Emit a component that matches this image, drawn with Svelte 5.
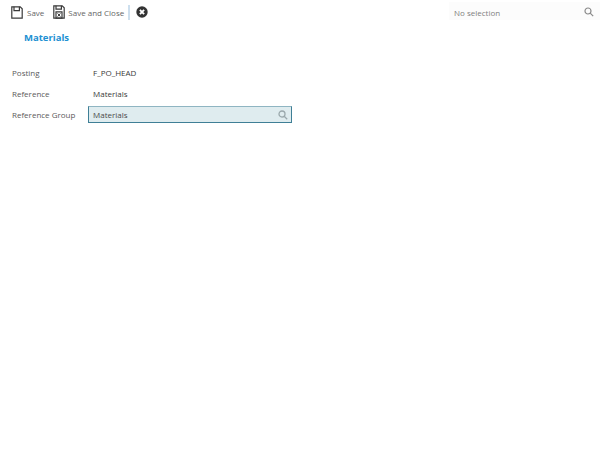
<script>
  const rows = [
    { label: 'Posting', value: 'F_PO_HEAD' },
    { label: 'Reference', value: 'Materials' }
  ];
</script>

<div class="page">
  <div class="topbar">
    <div class="toolbar">
      <button class="tool save">
        <svg width="12" height="13" viewBox="0 0 12 13" fill="none" stroke="#3a3a3a" stroke-width="1.2">
          <path d="M.8.8h8.4l2 2v9.4H.8z" />
          <path d="M3 .8v3.8h5.4V.8" />
        </svg>
        <span>Save</span>
      </button>
      <button class="tool close">
        <svg width="12" height="14" viewBox="0 0 12 14" fill="none" stroke="#3a3a3a" stroke-width="1.2">
          <path d="M.8.8h8.4l2 2v10.4H.8z" />
          <path d="M3 .8v3.4h5.4V.8" />
          <path d="M3 6.8h6v6.4H3z" />
          <path d="M4.6 8.4l2.8 3.2M7.4 8.4l-2.8 3.2" stroke-width="1" />
        </svg>
        <span>Save and Close</span>
      </button>
      <div class="sep"></div>
      <svg class="cancel" width="12" height="12" viewBox="0 0 12 12">
        <circle cx="6" cy="6" r="5.7" fill="#333" />
        <path d="M3.9 3.9l4.2 4.2M8.1 3.9l-4.2 4.2" stroke="#fff" stroke-width="1.9" />
      </svg>
    </div>
    <div class="selector">
      <span>No selection</span>
      <svg width="10" height="10" viewBox="0 0 10 10" fill="none" stroke="#8a8a8a" stroke-width="1.2">
        <circle cx="4" cy="4" r="3" />
        <path d="M6.2 6.2l3 3" />
      </svg>
    </div>
  </div>

  <h1>Materials</h1>

  <div class="form">
    {#each rows as row}
      <div class="row">
        <div class="label">{row.label}</div>
        <div class="value">{row.value}</div>
      </div>
    {/each}
    <div class="row">
      <div class="label">Reference Group</div>
      <div class="input">
        <span>Materials</span>
        <svg width="10" height="10" viewBox="0 0 10 10" fill="none" stroke="#9aa8ac" stroke-width="1.3">
          <circle cx="4" cy="4" r="3" />
          <path d="M6.2 6.2l3 3" />
        </svg>
      </div>
    </div>
  </div>
</div>

<style>
  :global(body) {
    margin: 0;
    background: #fff;
  }
  .page {
    width: 600px;
    height: 458px;
    font-family: "Open Sans", sans-serif;
    font-size: 8px;
    color: #444;
    overflow: hidden;
  }
  .topbar {
    display: flex;
    justify-content: space-between;
    height: 22px;
    padding-top: 2px;
    padding-left: 11px;
    box-sizing: border-box;
  }
  .toolbar {
    display: flex;
    align-items: center;
    height: 20px;
  }
  .tool {
    display: flex;
    align-items: center;
    gap: 4px;
    padding: 0;
    border: 0;
    background: none;
    font: inherit;
    color: #666;
  }
  .close {
    gap: 3px;
  }
  .save {
    margin-right: 9px;
  }
  .sep {
    width: 2px;
    height: 15px;
    background: #cddfee;
    margin: 0 6px 0 4px;
  }
  .selector {
    width: 151px;
    height: 18px;
    box-sizing: border-box;
    padding: 3px 6px 0 5px;
    background: #fcfcfc;
    display: flex;
    justify-content: space-between;
    align-items: flex-start;
    color: #808080;
    line-height: 15px;
  }
  .selector svg {
    margin-top: 2px;
  }
  h1 {
    margin: 9px 0 0 24px;
    font-size: 9.5px;
    line-height: 14px;
    font-weight: 700;
    color: #2190d2;
  }
  .form {
    margin-top: 17px;
    padding-left: 12px;
    display: flex;
    flex-direction: column;
  }
  .row {
    display: flex;
    align-items: center;
    height: 21px;
  }
  .label {
    width: 76px;
    color: #5a5a5a;
  }
  .value {
    margin-left: 5px;
    color: #3a3a3a;
  }
  .input {
    width: 204px;
    height: 17px;
    box-sizing: border-box;
    border: 1.5px solid #3f7f96;
    border-top-color: #8fb5c2;
    background: #dfecef;
    display: flex;
    align-items: center;
    justify-content: space-between;
    padding: 0 3px 0 4px;
    color: #4a4a4a;
  }
</style>
